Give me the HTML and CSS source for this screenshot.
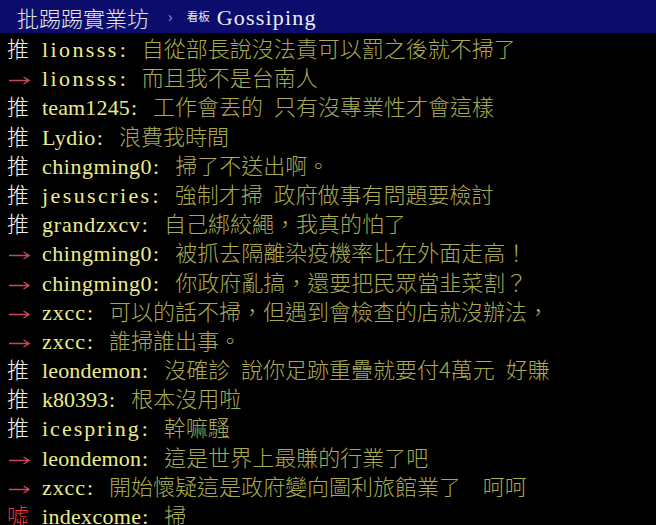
FILE: index.html
```html
<!DOCTYPE html>
<html lang="zh-Hant">
<head>
<meta charset="utf-8">
<title>批踢踢實業坊 › 看板 Gossiping</title>
<link rel="stylesheet" href="styles.css">
</head>
<body>
<header class="topbar">
  <span class="site">批踢踢實業坊</span>
  <span class="crumb">›</span>
  <span class="board-label">看板</span>
  <span class="board">Gossiping</span>
</header>
<main class="comments">
  <div class="row"><span class="tag push">推</span><span class="uid"><span class="name" style="letter-spacing:2.4px">lionsss</span>:</span><span class="msg">自從部長說沒法責可以罰之後就不掃了</span></div>
  <div class="row"><span class="tag arrow"><svg width="22" height="12" viewBox="0 0 22 12"><path d="M1 6.5H21M15.5 3L21 6.5L15.5 10" fill="none" stroke="#c8485e" stroke-width="1.3"/></svg></span><span class="uid"><span class="name" style="letter-spacing:2.4px">lionsss</span>:</span><span class="msg">而且我不是台南人</span></div>
  <div class="row"><span class="tag push">推</span><span class="uid"><span class="name" style="letter-spacing:0.15px">team1245</span>:</span><span class="msg">工作會丟的 只有沒專業性才會這樣</span></div>
  <div class="row"><span class="tag push">推</span><span class="uid"><span class="name" style="letter-spacing:0.5px">Lydio</span>:</span><span class="msg">浪費我時間</span></div>
  <div class="row"><span class="tag push">推</span><span class="uid"><span class="name" style="letter-spacing:0.5px">chingming0</span>:</span><span class="msg">掃了不送出啊。</span></div>
  <div class="row"><span class="tag push">推</span><span class="uid"><span class="name" style="letter-spacing:2.4px">jesuscries</span>:</span><span class="msg">強制才掃 政府做事有問題要檢討</span></div>
  <div class="row"><span class="tag push">推</span><span class="uid"><span class="name" style="letter-spacing:0.8px">grandzxcv</span>:</span><span class="msg">自己綁絞繩，我真的怕了</span></div>
  <div class="row"><span class="tag arrow"><svg width="22" height="12" viewBox="0 0 22 12"><path d="M1 6.5H21M15.5 3L21 6.5L15.5 10" fill="none" stroke="#c8485e" stroke-width="1.3"/></svg></span><span class="uid"><span class="name" style="letter-spacing:0.5px">chingming0</span>:</span><span class="msg">被抓去隔離染疫機率比在外面走高！</span></div>
  <div class="row"><span class="tag arrow"><svg width="22" height="12" viewBox="0 0 22 12"><path d="M1 6.5H21M15.5 3L21 6.5L15.5 10" fill="none" stroke="#c8485e" stroke-width="1.3"/></svg></span><span class="uid"><span class="name" style="letter-spacing:0.5px">chingming0</span>:</span><span class="msg">你政府亂搞，還要把民眾當韭菜割？</span></div>
  <div class="row"><span class="tag arrow"><svg width="22" height="12" viewBox="0 0 22 12"><path d="M1 6.5H21M15.5 3L21 6.5L15.5 10" fill="none" stroke="#c8485e" stroke-width="1.3"/></svg></span><span class="uid"><span class="name" style="letter-spacing:0.9px">zxcc</span>:</span><span class="msg">可以的話不掃，但遇到會檢查的店就沒辦法，</span></div>
  <div class="row"><span class="tag arrow"><svg width="22" height="12" viewBox="0 0 22 12"><path d="M1 6.5H21M15.5 3L21 6.5L15.5 10" fill="none" stroke="#c8485e" stroke-width="1.3"/></svg></span><span class="uid"><span class="name" style="letter-spacing:0.9px">zxcc</span>:</span><span class="msg">誰掃誰出事。</span></div>
  <div class="row"><span class="tag push">推</span><span class="uid"><span class="name" style="letter-spacing:0.15px">leondemon</span>:</span><span class="msg">沒確診 說你足跡重疊就要付4萬元 好賺</span></div>
  <div class="row"><span class="tag push">推</span><span class="uid"><span class="name" style="letter-spacing:0px">k80393</span>:</span><span class="msg">根本沒用啦</span></div>
  <div class="row"><span class="tag push">推</span><span class="uid"><span class="name" style="letter-spacing:2px">icespring</span>:</span><span class="msg">幹嘛騷</span></div>
  <div class="row"><span class="tag arrow"><svg width="22" height="12" viewBox="0 0 22 12"><path d="M1 6.5H21M15.5 3L21 6.5L15.5 10" fill="none" stroke="#c8485e" stroke-width="1.3"/></svg></span><span class="uid"><span class="name" style="letter-spacing:0.15px">leondemon</span>:</span><span class="msg">這是世界上最賺的行業了吧</span></div>
  <div class="row"><span class="tag arrow"><svg width="22" height="12" viewBox="0 0 22 12"><path d="M1 6.5H21M15.5 3L21 6.5L15.5 10" fill="none" stroke="#c8485e" stroke-width="1.3"/></svg></span><span class="uid"><span class="name" style="letter-spacing:0.9px">zxcc</span>:</span><span class="msg">開始懷疑這是政府變向圖利旅館業了  呵呵</span></div>
  <div class="row"><span class="tag boo">噓</span><span class="uid"><span class="name" style="letter-spacing:0.3px">indexcome</span>:</span><span class="msg">掃</span></div>
</main>
</body>
</html>
```

FILE: styles.css
```css
html, body {
  margin: 0;
  padding: 0;
  background: #000;
  width: 656px;
  height: 525px;
  overflow: hidden;
}

body {
  font-family: "Noto Sans CJK TC", "Noto Sans CJK SC", sans-serif;
  font-size: 22px;
}

.topbar {
  height: 33px;
  background: #0c0c6c;
  display: flex;
  align-items: center;
  padding-left: 17px;
  box-sizing: border-box;
  white-space: nowrap;
}

.site {
  color: #e4e4e4;
  font-size: 22px;
  font-weight: 300;
  line-height: 1;
}

.crumb {
  color: #9a9ac8;
  font-family: "Liberation Sans", sans-serif;
  font-size: 14px;
  margin-left: 19px;
  line-height: 1;
}

.board-label {
  color: #e8e8e8;
  font-size: 11.5px;
  margin-left: 14px;
  line-height: 1;
}

.board {
  color: #ececec;
  margin-left: 7px;
  font-family: "Liberation Serif", serif;
  font-size: 22px;
  letter-spacing: 1.2px;
  line-height: 1;
  position: relative;
  top: 1px;
}

.comments {
  padding-left: 7px;
}

.row {
  height: 29.2px;
  line-height: 29.2px;
  white-space: pre;
  overflow: hidden;
}

.tag {
  display: inline-block;
  width: 35px;
  font-weight: 300;
}

.push {
  color: #f2f2f2;
}

.boo {
  color: #e23a3a;
}

.arrow svg {
  display: inline-block;
  vertical-align: middle;
  margin-left: 1px;
}

.uid {
  display: inline-block;
  min-width: 0;
  padding-right: 16px;
  color: #ecec8a;
  font-family: "Liberation Serif", serif;
  font-size: 22px;
  white-space: nowrap;
}

.name {
  margin-right: 1px;
}

.msg {
  color: #aaaa52;
  font-weight: 300;
  word-spacing: 6px;
}
```
